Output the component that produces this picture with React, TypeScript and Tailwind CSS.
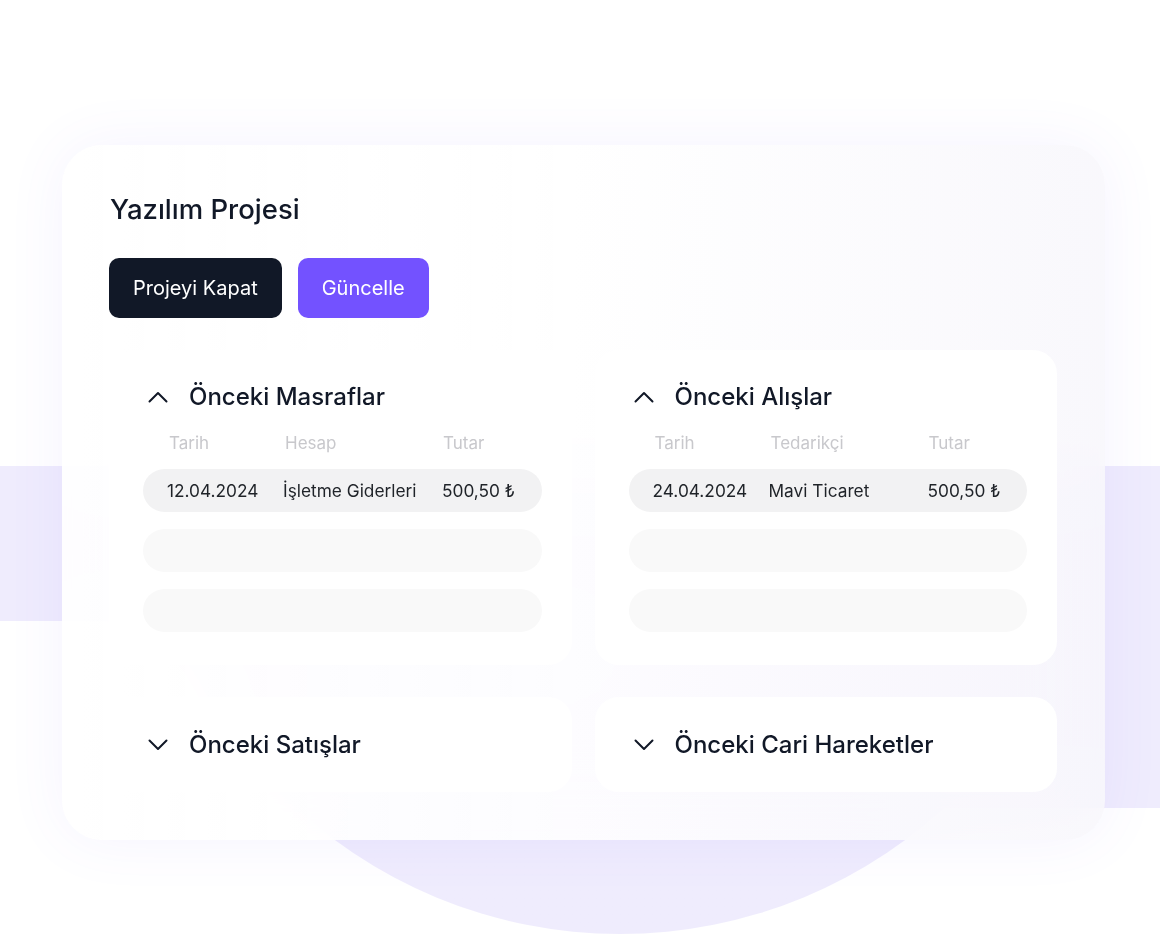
import React from 'react';

type Row = { date: string; name: string; amount: string };

interface AccordionCardProps {
  title: string;
  open?: boolean;
  columns?: string[];
  rows?: Row[];
}

const Chevron: React.FC<{ up?: boolean }> = ({ up }) => (
  <svg
    width="20"
    height="12"
    viewBox="0 0 20 12"
    fill="none"
    stroke="#111827"
    strokeWidth="2"
    strokeLinecap="round"
    strokeLinejoin="round"
    className="shrink-0"
  >
    {up ? <path d="M1.5 10.5 10 2l8.5 8.5" /> : <path d="M1.5 1.5 10 10l8.5-8.5" />}
  </svg>
);

const AccordionCard: React.FC<AccordionCardProps> = ({ title, open, columns = [], rows = [] }) => {
  if (!open) {
    return (
      <div className="flex h-[95px] items-center rounded-[24px] bg-white pl-[39px]">
        <Chevron />
        <span className="ml-[21px] text-[24px] font-medium leading-[30px] text-[#111827]">{title}</span>
      </div>
    );
  }

  return (
    <div className="rounded-[24px] bg-white pb-[33px] pl-[34px] pr-[30px] pt-[32px]">
      <div className="flex h-[30px] items-center pl-[5px]">
        <Chevron up />
        <span className="ml-[21px] text-[24px] font-medium leading-[30px] text-[#111827]">{title}</span>
      </div>

      <div className="mt-[21px] grid grid-cols-[116px_158px_1fr] pl-[26px] text-[17px] leading-[20px] text-[#c8c8cc]">
        {columns.map((c) => (
          <span key={c}>{c}</span>
        ))}
      </div>

      <div className="mt-[16px] flex flex-col gap-[17px]">
        {rows.map((r) => (
          <div
            key={r.date}
            className="grid h-[43px] grid-cols-[116px_159px_1fr] items-center rounded-full bg-[#f2f2f3] pl-[24px] text-[17.3px] text-[#1f2328]"
          >
            <span>{r.date}</span>
            <span>{r.name}</span>
            <span>{r.amount}</span>
          </div>
        ))}
        <div className="h-[43px] rounded-full bg-[#f9f9f9]" />
        <div className="h-[43px] rounded-full bg-[#f9f9f9]" />
      </div>
    </div>
  );
};

export default function App() {
  return (
    <div className="relative h-[934px] w-full overflow-hidden bg-white font-['Inter','Noto_Sans',sans-serif]">
      {/* decorative background */}
      <div className="absolute left-0 top-[466px] h-[155px] w-[600px] bg-[#efecfd]" />
      <div className="absolute right-0 top-[466px] h-[342px] w-[560px] bg-[#efecfd]" />
      <div className="absolute left-[140px] top-[-26px] h-[960px] w-[960px] rounded-full bg-gradient-to-b from-transparent from-45% to-[#efecfd] to-75%" />

      <div className="relative z-10 ml-[62px] mt-[145px] h-[695px] w-[1043px] rounded-[40px] bg-gradient-to-r from-white/90 via-white/85 to-[#f8f7fc]/85 pl-[47px] pr-[48px] pt-[47px] shadow-[0_0_60px_rgba(115,82,255,0.07)] backdrop-blur-2xl">
        <h1 className="ml-[1px] text-[27.5px] font-medium leading-[34px] text-[#111827]">Yazılım Projesi</h1>

        <div className="mt-[32px] flex gap-[16px]">
          <button className="h-[60px] rounded-[10px] bg-[#111827] px-[24px] text-[20px] text-white">
            Projeyi Kapat
          </button>
          <button className="h-[60px] rounded-[10px] bg-[#7352ff] px-[24px] text-[20px] text-white">
            Güncelle
          </button>
        </div>

        <div className="mt-[32px] grid grid-cols-2 gap-x-[23px] gap-y-[32px]">
          <AccordionCard
            title="Önceki Masraflar"
            open
            columns={['Tarih', 'Hesap', 'Tutar']}
            rows={[{ date: '12.04.2024', name: 'İşletme Giderleri', amount: '500,50 ₺' }]}
          />
          <AccordionCard
            title="Önceki Alışlar"
            open
            columns={['Tarih', 'Tedarikçi', 'Tutar']}
            rows={[{ date: '24.04.2024', name: 'Mavi Ticaret', amount: '500,50 ₺' }]}
          />
          <AccordionCard title="Önceki Satışlar" />
          <AccordionCard title="Önceki Cari Hareketler" />
        </div>
      </div>
    </div>
  );
}
